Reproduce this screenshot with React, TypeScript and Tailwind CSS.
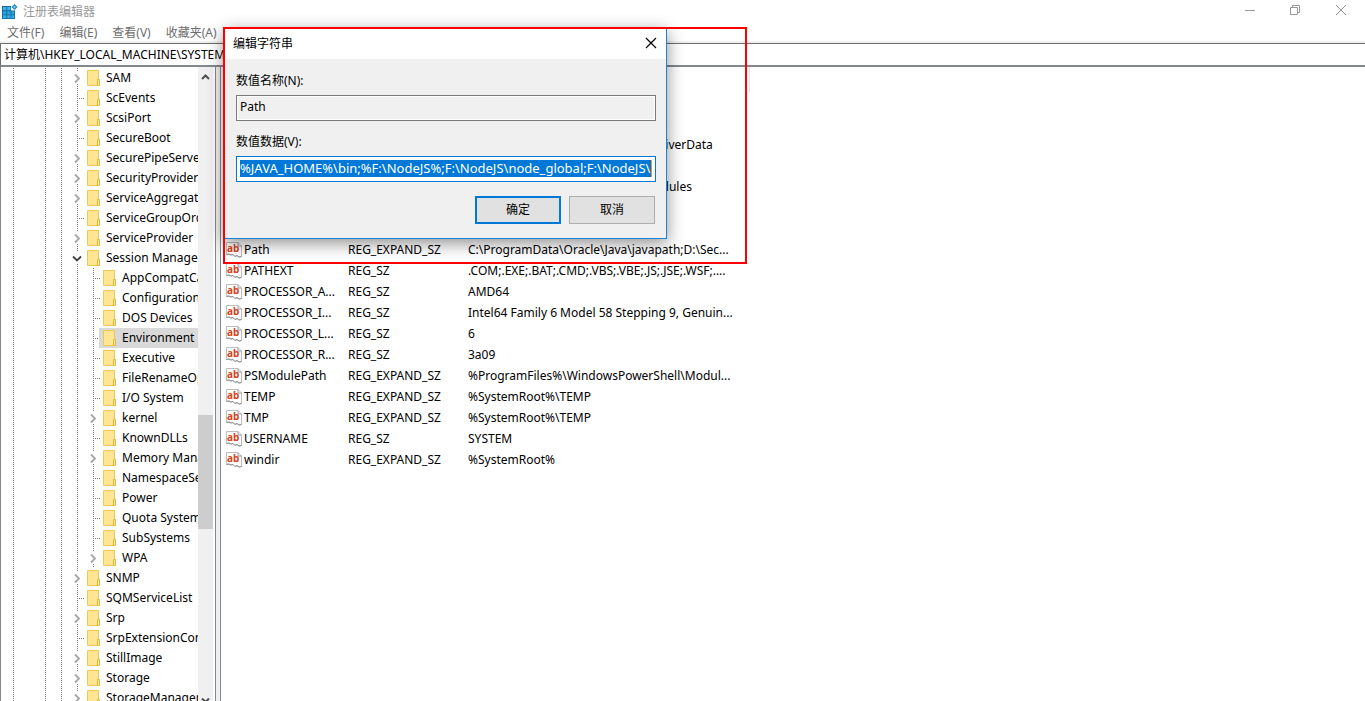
import React from 'react';

interface TreeItem {
  name: string;
  level: 1 | 2;
  state?: 'collapsed' | 'expanded';
  selected?: boolean;
}

interface RegistryValue {
  name: string;
  type: string;
  data: string;
}

const TREE: TreeItem[] = [
  { name: 'SAM', level: 1, state: 'collapsed' },
  { name: 'ScEvents', level: 1 },
  { name: 'ScsiPort', level: 1, state: 'collapsed' },
  { name: 'SecureBoot', level: 1 },
  { name: 'SecurePipeServers', level: 1, state: 'collapsed' },
  { name: 'SecurityProviders', level: 1, state: 'collapsed' },
  { name: 'ServiceAggregatedEvents', level: 1, state: 'collapsed' },
  { name: 'ServiceGroupOrder', level: 1 },
  { name: 'ServiceProvider', level: 1, state: 'collapsed' },
  { name: 'Session Manager', level: 1, state: 'expanded' },
  { name: 'AppCompatCache', level: 2 },
  { name: 'Configuration Manager', level: 2 },
  { name: 'DOS Devices', level: 2 },
  { name: 'Environment', level: 2, selected: true },
  { name: 'Executive', level: 2 },
  { name: 'FileRenameOperations', level: 2 },
  { name: 'I/O System', level: 2 },
  { name: 'kernel', level: 2, state: 'collapsed' },
  { name: 'KnownDLLs', level: 2 },
  { name: 'Memory Management', level: 2, state: 'collapsed' },
  { name: 'NamespaceSeparation', level: 2 },
  { name: 'Power', level: 2 },
  { name: 'Quota System', level: 2 },
  { name: 'SubSystems', level: 2 },
  { name: 'WPA', level: 2, state: 'collapsed' },
  { name: 'SNMP', level: 1, state: 'collapsed' },
  { name: 'SQMServiceList', level: 1 },
  { name: 'Srp', level: 1, state: 'collapsed' },
  { name: 'SrpExtensionConfig', level: 1 },
  { name: 'StillImage', level: 1, state: 'collapsed' },
  { name: 'Storage', level: 1, state: 'collapsed' },
  { name: 'StorageManagement', level: 1, state: 'collapsed' },
];

const VALUES: RegistryValue[] = [
  { name: '(默认)', type: 'REG_SZ', data: '(数值未设置)' },
  { name: 'ComSpec', type: 'REG_EXPAND_SZ', data: '%SystemRoot%\\System32\\Cmd.exe' },
  { name: 'DriverData', type: 'REG_SZ', data: 'C:\\WINDOWS\\System32\\Drivers\\DriverData' },
  { name: 'JAVA_HOME', type: 'REG_SZ', data: 'D:\\Java\\jdk' },
  { name: 'NODE_PATH', type: 'REG_SZ', data: 'F:\\NODEJS\\node_global\\\\node_modules' },
  { name: 'NUMBER_OF_P...', type: 'REG_SZ', data: '4' },
  { name: 'OS', type: 'REG_SZ', data: 'Windows_NT' },
  { name: 'Path', type: 'REG_EXPAND_SZ', data: 'C:\\ProgramData\\Oracle\\Java\\javapath;D:\\Sec...' },
  { name: 'PATHEXT', type: 'REG_SZ', data: '.COM;.EXE;.BAT;.CMD;.VBS;.VBE;.JS;.JSE;.WSF;....' },
  { name: 'PROCESSOR_A...', type: 'REG_SZ', data: 'AMD64' },
  { name: 'PROCESSOR_I...', type: 'REG_SZ', data: 'Intel64 Family 6 Model 58 Stepping 9, Genuin...' },
  { name: 'PROCESSOR_L...', type: 'REG_SZ', data: '6' },
  { name: 'PROCESSOR_R...', type: 'REG_SZ', data: '3a09' },
  { name: 'PSModulePath', type: 'REG_EXPAND_SZ', data: '%ProgramFiles%\\WindowsPowerShell\\Modul...' },
  { name: 'TEMP', type: 'REG_EXPAND_SZ', data: '%SystemRoot%\\TEMP' },
  { name: 'TMP', type: 'REG_EXPAND_SZ', data: '%SystemRoot%\\TEMP' },
  { name: 'USERNAME', type: 'REG_SZ', data: 'SYSTEM' },
  { name: 'windir', type: 'REG_EXPAND_SZ', data: '%SystemRoot%' },
];

const MENUS = ['文件(F)', '编辑(E)', '查看(V)', '收藏夹(A)'];

function RegeditIcon() {
  return (
    <svg width="16" height="16" viewBox="0 0 16 16" className="shrink-0">
      <path d="M0 2h9v4.500h4V15H0z" fill="#14689a" />
      <path d="M1 3h3.300v3.300H1zM5.200 3h3.300v3.300H5.200z" fill="#3db5e6" />
      <path d="M1 7.200h3.300v3.300H1zM5.200 7.200h3.300v3.300H5.200zM9.300 7.200h3v3.300h-3z" fill="#2ba3da" />
      <path d="M1 11.300h3.300v3H1zM5.200 11.300h3.300v3H5.200zM9.300 11.300h3v3h-3z" fill="#35b0e4" />
      <path d="M12.500 0l3 3-3 3-3-3z" fill="#1f86bd" />
      <path d="M12.500 1.600l1.400 1.400-1.400 1.400L11.100 3z" fill="#6fd0f2" />
    </svg>
  );
}

function FolderIcon() {
  return (
    <svg width="14" height="16" viewBox="0 0 14 16" className="shrink-0">
      <path d="M.5.5h11v15H.5z" fill="#ffe694" stroke="#ecc94f" />
      <path d="M10.500 9.500h2v6h-2z" fill="#ffe694" stroke="#e3b93b" />
    </svg>
  );
}

function StringIcon() {
  return (
    <svg width="16" height="16" viewBox="0 0 16 16" className="shrink-0">
      <path d="M.5.500h11.500l3.500 3.500v10.500l-2.500.5-2-1.500-2 1-2-2-2 .5-2-1-2.500.5z" fill="#fff" stroke="#bdbdbd" />
      <path d="M.5 12.500l2.500-.5 2 1 2-.5 2 2 2-1 2 1.500 2.500-.5" fill="none" stroke="#8c8c8c" />
      <path d="M12 .5v3.500h3.500" fill="none" stroke="#9b9b9b" />
      <text x="1" y="10" fontSize="10" fontWeight="700" fill="#d2451e" fontFamily="Noto Sans, sans-serif">ab</text>
    </svg>
  );
}

// dotted connector lines, one 16px cell per level
function Guide({ kind }: { kind: 'blank' | 'line' | 'tee' | 'collapsed' | 'expanded' }) {
  return (
    <svg width="16" height="20" viewBox="0 0 16 20" className="shrink-0">
      {(kind === 'line' || kind === 'tee') && (
        <path d="M8.500 0v20" stroke="#808080" strokeDasharray="1 1" />
      )}
      {kind === 'tee' && <path d="M10 10.500h6" stroke="#808080" strokeDasharray="1 1" />}
      {(kind === 'collapsed' || kind === 'expanded') && (
        <path d="M8.500 0v4M8.500 16v4" stroke="#808080" strokeDasharray="1 1" />
      )}
      {kind === 'collapsed' && <path d="M6 6.500l4 4-4 4" fill="none" stroke="#a6a6a6" strokeWidth="1.800" />}
      {kind === 'expanded' && <path d="M4 8.500l4 4 4-4" fill="none" stroke="#404040" strokeWidth="1.800" />}
    </svg>
  );
}

function TreeRow({ item }: { item: TreeItem }) {
  return (
    <li className="flex h-5 items-center whitespace-nowrap">
      <Guide kind="line" />
      <Guide kind="blank" />
      <Guide kind="line" />
      <Guide kind="line" />
      {item.level === 2 && <Guide kind="line" />}
      <Guide kind={item.state ?? 'tee'} />
      <span className={`-ml-0.5 flex h-5 flex-1 items-center gap-[5px] pl-1 ${item.selected ? 'bg-[#d9d9d9]' : ''}`}>
        <FolderIcon />
        {item.name}
      </span>
    </li>
  );
}

function EditDialog() {
  return (
    <div
      role="dialog"
      aria-labelledby="dialog-title"
      className="absolute top-7 left-56 w-[443px] border border-[#1883d7] bg-[#f0f0f0] shadow-[0_4px_16px_rgba(0,0,0,0.45)]"
    >
      <div className="flex h-[30px] items-center justify-between bg-white pr-[7px] pl-2">
        <h2 id="dialog-title">编辑字符串</h2>
        <button type="button" aria-label="关闭" className="p-0.5 pb-1">
          <svg width="12" height="12" viewBox="0 0 12 12">
            <path d="M1 1l10 10M11 1L1 11" stroke="#000" strokeWidth="1.200" />
          </svg>
        </button>
      </div>
      <form className="pt-3 pr-2.5 pb-3.5 pl-[11px]">
        <label htmlFor="value-name" className="block h-6 leading-5">数值名称(N):</label>
        <input
          id="value-name"
          readOnly
          defaultValue="Path"
          className="block h-[26px] w-full border border-[#7a7a7a] bg-[#f0f0f0] px-[3px] pb-1 shadow-[inset_0_0_0_1px_#fff] outline-none"
        />
        <label htmlFor="value-data" className="mt-[11px] block h-6 leading-5">数值数据(V):</label>
        <div className="flex h-[26px] border border-[#0078d7] bg-white px-[3px] pt-[3px]">
          <input
            id="value-data"
            defaultValue="%JAVA_HOME%\bin;%F:\NodeJS%;F:\NodeJS\node_global;F:\NodeJS\;"
            className="h-[17px] min-w-0 flex-1 bg-[#0078d7] text-[13px] text-white outline-none"
          />
          <span className="h-[17px] w-px bg-[#ff8728]" />
        </div>
        <div className="mt-3.5 flex justify-end gap-2 pr-px">
          <button type="submit" className="h-7 w-[86px] border-2 border-[#0078d7] bg-[#e1e1e1]">确定</button>
          <button type="button" className="h-7 w-[86px] border border-[#adadad] bg-[#e1e1e1]">取消</button>
        </div>
      </form>
    </div>
  );
}

export default function App() {
  return (
    <div className="relative flex h-screen flex-col overflow-hidden bg-white font-['Noto_Sans','Noto_Sans_CJK_SC',sans-serif] text-xs text-black">
      <header className="flex h-[22px] items-center justify-between pt-px pl-0.5 text-[#999]">
        <div className="flex items-center gap-[5px]">
          <RegeditIcon />
          <h1>注册表编辑器</h1>
        </div>
        <div className="flex pb-[3px]">
          <button type="button" aria-label="最小化" className="flex w-[45px] justify-center">
            <svg width="12" height="12" viewBox="0 0 12 12"><path d="M1 6.500h10" stroke="#999" /></svg>
          </button>
          <button type="button" aria-label="还原" className="flex w-[45px] justify-center">
            <svg width="12" height="12" viewBox="0 0 12 12" fill="none" stroke="#999">
              <path d="M1.500 3.500h7v7h-7zM3.500 3.500v-2h7v7h-2" />
            </svg>
          </button>
          <button type="button" aria-label="关闭" className="flex w-12 justify-center">
            <svg width="12" height="12" viewBox="0 0 12 12"><path d="M1 1l10 10M11 1L1 11" stroke="#999" /></svg>
          </button>
        </div>
      </header>

      <nav className="flex h-[21px] items-center gap-[15px] border-b-2 border-[#f0f0f0] pt-0.5 pl-[7px] text-[#6d6d6d]">
        {MENUS.map((m) => (
          <button key={m} type="button">{m}</button>
        ))}
      </nav>

      <input
        aria-label="地址"
        defaultValue="计算机\HKEY_LOCAL_MACHINE\SYSTEM\CurrentControlSet\Control\Session Manager\Environment"
        className="h-6 shrink-0 border-t border-b-2 border-l border-t-[#6d6d6d] border-b-[#828790] border-l-[#6d6d6d] pb-0.5 pl-[3px] outline-none"
      />

      <main className="flex min-h-0 flex-1">
        <aside className="flex w-[216px] shrink-0 border-x border-[#828790] pr-0.5">
          <ul className="min-w-0 flex-1 overflow-hidden pt-px pl-1">
            {TREE.map((item) => (
              <TreeRow key={item.name} item={item} />
            ))}
          </ul>
          <div className="flex w-[15px] shrink-0 flex-col items-center bg-[#f0f0f0]">
            <svg width="15" height="18" viewBox="0 0 15 18">
              <path d="M4 12l3.500-3.500L11 12" fill="none" stroke="#505050" strokeWidth="2" />
            </svg>
            <div className="mt-[330px] h-[114px] w-full bg-[#cdcdcd]" />
            <svg width="15" height="8" viewBox="0 0 15 8" className="mt-auto">
              <path d="M4 5.500L7.500 9 11 5.500" fill="none" stroke="#505050" strokeWidth="2" />
            </svg>
          </div>
        </aside>
        <div className="w-1 shrink-0 bg-[#f0f0f0]" />
        <section className="min-w-0 flex-1 border-l border-[#828790]">
          <div className="h-[25px] w-[529px] border-r border-[#e5e5e5]" />
          <table className="table-fixed border-collapse text-left whitespace-nowrap">
            <colgroup>
              <col className="w-[127px]" />
              <col className="w-[120px]" />
              <col className="w-[282px]" />
            </colgroup>
            <tbody>
              {VALUES.map((v) => (
                <tr key={v.name} className="h-[21px]">
                  <td className="p-0 pl-[5px]">
                    <span className="flex items-center gap-0.5">
                      <StringIcon />
                      {v.name}
                    </span>
                  </td>
                  <td className="p-0">{v.type}</td>
                  <td className="p-0">{v.data}</td>
                </tr>
              ))}
            </tbody>
          </table>
        </section>
      </main>

      <EditDialog />
      <div className="pointer-events-none absolute top-[27px] left-[223px] h-[237px] w-[524px] border-2 border-[#f00]" />
    </div>
  );
}
